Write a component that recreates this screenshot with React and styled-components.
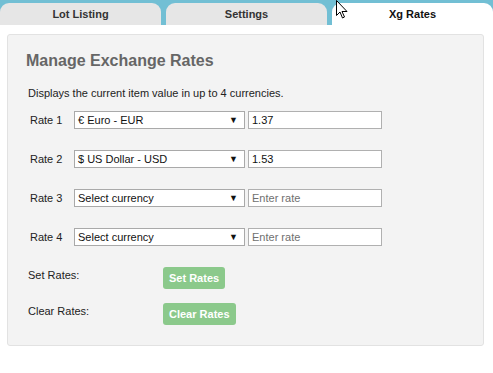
import React from 'react';
import styled, { createGlobalStyle } from 'styled-components';

const Global = createGlobalStyle`
  html, body { margin: 0; padding: 0; background: #fff; }
  body { font-family: "Liberation Sans", Arial, sans-serif; }
`;

const Page = styled.div`
  position: relative;
  width: 493px;
  height: 373px;
  overflow: hidden;
  background: #fff;
`;

const TabBar = styled.div`
  display: flex;
  gap: 5px;
  height: 22px;
  padding-top: 3px;
  background: #72bfd4;
`;

const Tab = styled.div`
  flex: 1;
  display: flex;
  align-items: center;
  justify-content: center;
  border-radius: 9px 9px 0 0;
  background: ${p => (p.active ? '#fff' : '#e6e6e6')};
  color: ${p => (p.active ? '#111' : '#333')};
  font-size: 11px;
  font-weight: bold;
`;

const Panel = styled.div`
  margin: 9px 9px 0 7px;
  height: 312px;
  box-sizing: border-box;
  background: #f3f3f3;
  border: 1px solid #e2e2e2;
  border-radius: 3px;
  padding: 17px 18px 0 18px;
`;

const Title = styled.h2`
  margin: 0;
  font-size: 16px;
  font-weight: bold;
  color: #666;
`;

const Desc = styled.p`
  margin: 17px 0 0 2px;
  font-size: 11px;
  color: #222;
`;

const Rows = styled.div`
  display: flex;
  flex-direction: column;
  gap: 21px;
  margin-top: 12px;
`;

const Row = styled.div`
  display: flex;
  align-items: center;
  height: 18px;
`;

const Label = styled.span`
  width: 44px;
  padding-left: 4px;
  font-size: 11px;
  color: #222;
`;

const Select = styled.div`
  display: flex;
  align-items: center;
  justify-content: space-between;
  width: 171px;
  height: 18px;
  box-sizing: border-box;
  padding: 0 6px 0 3px;
  background: #fff;
  border: 1px solid #a9a9a9;
  font-size: 11px;
  color: #111;
`;

const Arrow = styled.span`
  font-size: 9px;
  color: #111;
`;

const Input = styled.div`
  width: 134px;
  height: 18px;
  box-sizing: border-box;
  margin-left: 3px;
  padding: 1px 3px 0 3px;
  background: #fff;
  border: 1px solid #b0b0b0;
  font-size: 11px;
  line-height: 15px;
  color: ${p => (p.placeholder ? '#6f6f6f' : '#111')};
`;

const Actions = styled.div`
  display: grid;
  grid-template-columns: 137px auto;
  row-gap: 13px;
  margin-top: 20px;
  align-items: start;
`;

const ActionLabel = styled.span`
  margin-top: 3px;
  padding-left: 2px;
  font-size: 11px;
  color: #222;
`;

const GreenButton = styled.div`
  justify-self: start;
  margin-top: 1px;
  padding: 5px 6px;
  background: #8bc98b;
  border-radius: 3px;
  color: #fff;
  font-size: 11px;
  font-weight: bold;
`;

const Cursor = styled.svg`
  position: absolute;
  left: 336px;
  top: 0;
`;

const rates = [
  { label: 'Rate 1', currency: '€ Euro - EUR', value: '1.37' },
  { label: 'Rate 2', currency: '$ US Dollar - USD', value: '1.53' },
  { label: 'Rate 3', currency: 'Select currency', value: '' },
  { label: 'Rate 4', currency: 'Select currency', value: '' },
];

export default function App() {
  return (
    <Page>
      <Global />
      <TabBar>
        <Tab>Lot Listing</Tab>
        <Tab>Settings</Tab>
        <Tab active>Xg Rates</Tab>
      </TabBar>
      <Panel>
        <Title>Manage Exchange Rates</Title>
        <Desc>Displays the current item value in up to 4 currencies.</Desc>
        <Rows>
          {rates.map(r => (
            <Row key={r.label}>
              <Label>{r.label}</Label>
              <Select>
                <span>{r.currency}</span>
                <Arrow>▼</Arrow>
              </Select>
              <Input placeholder={!r.value}>{r.value || 'Enter rate'}</Input>
            </Row>
          ))}
        </Rows>
        <Actions>
          <ActionLabel>Set Rates:</ActionLabel>
          <GreenButton>Set Rates</GreenButton>
          <ActionLabel>Clear Rates:</ActionLabel>
          <GreenButton>Clear Rates</GreenButton>
        </Actions>
      </Panel>
      <Cursor width="12" height="19" viewBox="0 0 12 19">
        <path d="M0.5 0.5 L0.5 15.5 L4 12 L6.5 18 L8.5 17 L6 11.5 L11 11.5 Z" fill="#fff" stroke="#000" strokeWidth="1" />
      </Cursor>
    </Page>
  );
}
